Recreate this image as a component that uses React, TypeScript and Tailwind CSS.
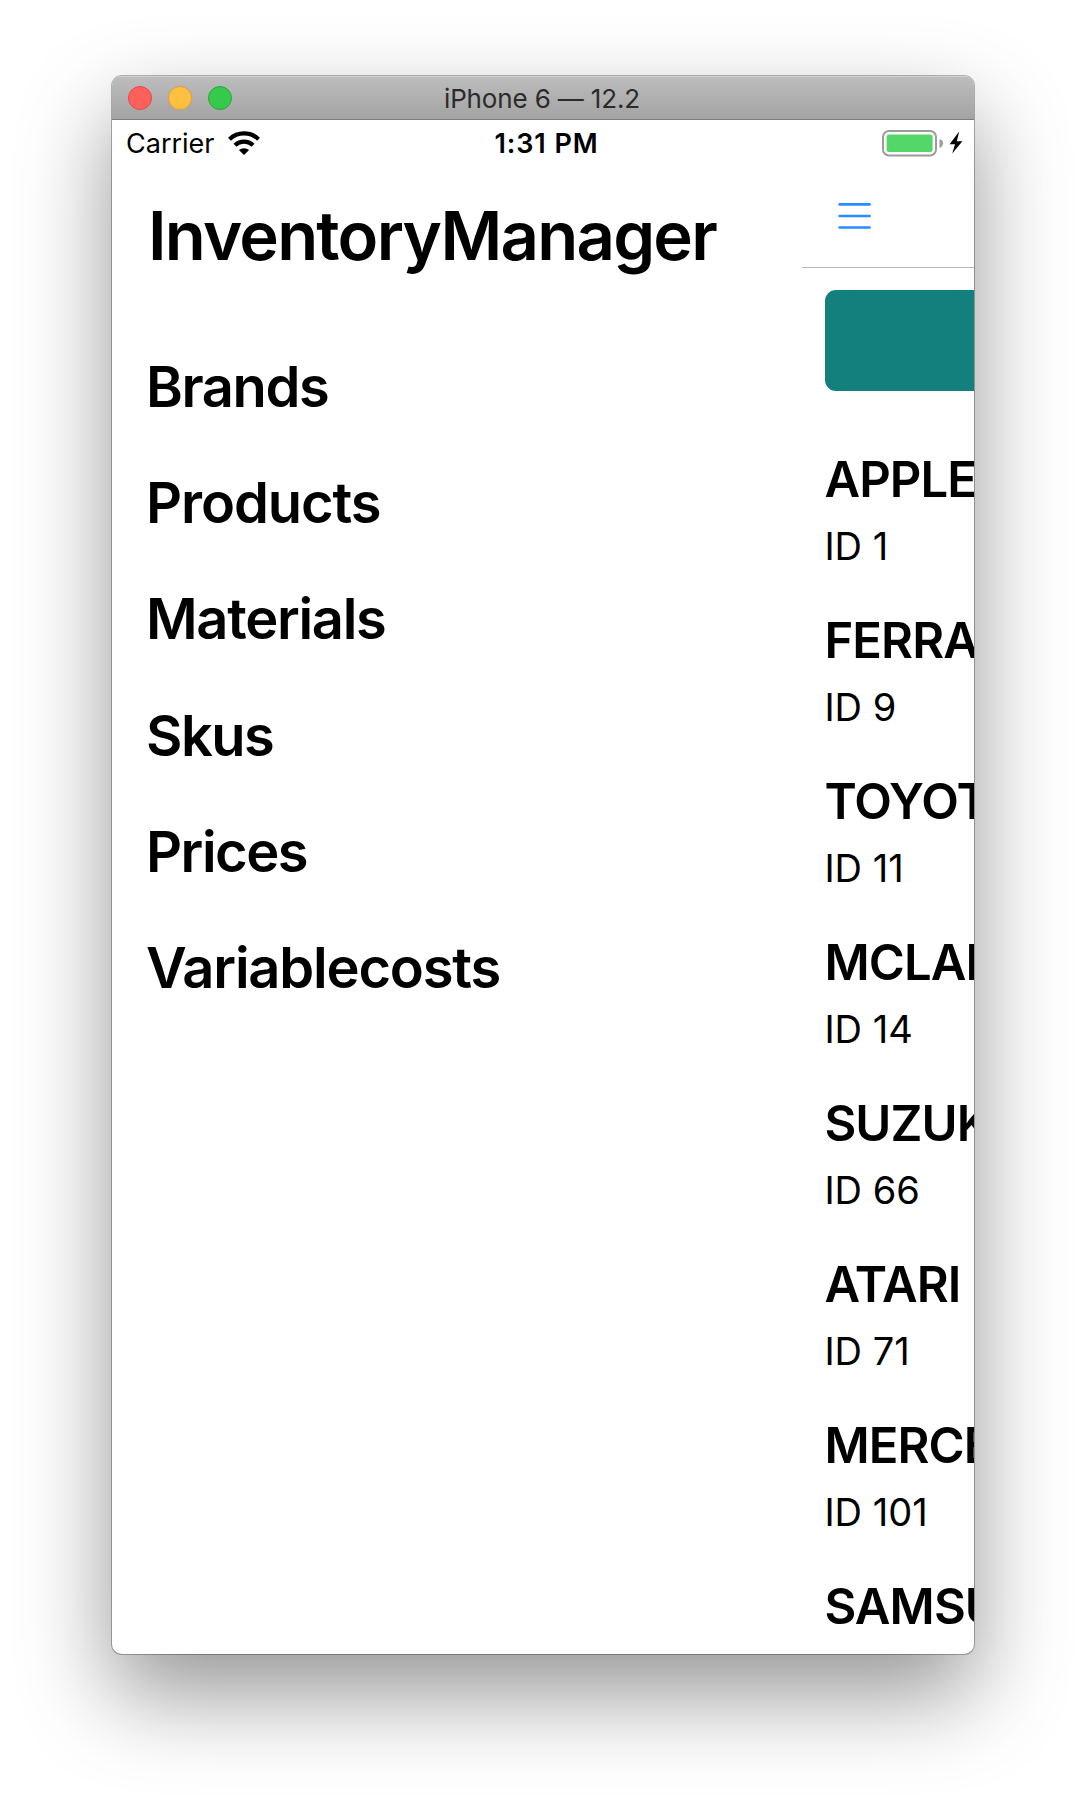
import React from "react";

const menu = [
  { label: "Brands", cls: "tracking-[-1.4px]" },
  { label: "Products", cls: "tracking-[-1.1px]" },
  { label: "Materials", cls: "tracking-[-1.3px]" },
  { label: "Skus", cls: "tracking-[-1.5px]" },
  { label: "Prices", cls: "tracking-[-1.5px]" },
  { label: "Variablecosts", cls: "tracking-[-1.2px]" },
];

const brands = [
  { name: "APPLE", id: 1 },
  { name: "FERRARI", id: 9 },
  { name: "TOYOTA", id: 11 },
  { name: "MCLAREN", id: 14 },
  { name: "SUZUKI", id: 66 },
  { name: "ATARI", id: 71 },
  { name: "MERCEDES", id: 101 },
  { name: "SAMSUNG", id: 102 },
];

function TitleBar() {
  return (
    <div className="relative flex h-11 shrink-0 items-center justify-center border-b border-[#7d7d7d] bg-linear-to-b from-[#bdbdbd] to-[#a3a3a3] shadow-[inset_0_1px_0_#d2d2d2]">
      <div className="absolute left-4 top-[10px] flex gap-4">
        <span className="size-6 rounded-full border border-[#e24b46] bg-[#fe605c]" />
        <span className="size-6 rounded-full border border-[#e0a033] bg-[#ffbf41]" />
        <span className="size-6 rounded-full border border-[#27a839] bg-[#35ca4b]" />
      </div>
      <span className="mr-[2px] mt-[2px] text-[26px] leading-none tracking-[-0.15px] text-[#2b2b2b]">iPhone 6 — 12.2</span>
    </div>
  );
}

function StatusBar() {
  return (
    <div className="flex h-[48px] shrink-0 items-center justify-between pl-[14px] pr-[10px]">
      <div className="flex w-[150px] items-center gap-[13px]">
        <span className="mb-px text-[27px] leading-none">Carrier</span>
        <svg className="mb-[2px]" width="32" height="24" viewBox="0 0 32 24" fill="none" stroke="#000" strokeWidth="4.2">
          <path d="M1.5 8.2 A 21 21 0 0 1 30.5 8.2" />
          <path d="M7 14.2 A 13 13 0 0 1 25 14.2" />
          <path d="M10.9 19 A 8 8 0 0 1 21.1 19 L 16 24 Z" fill="#000" stroke="none" />
        </svg>
      </div>
      <span className="mb-px ml-[3px] text-[27px] leading-none font-semibold tracking-[0.9px]">1:31 PM</span>
      <div className="flex w-[150px] items-center justify-end">
        <svg width="82" height="28" viewBox="0 0 82 28">
          <rect x="1" y="1" width="53" height="24.5" rx="6" fill="none" stroke="#9b9b9b" strokeWidth="2" />
          <rect x="4.6" y="4.5" width="46" height="17.5" rx="2.5" fill="#53d769" />
          <path d="M57.5 9 Q 61 10 61 13.3 Q 61 16.6 57.5 18 Z" fill="#9b9b9b" />
          <path d="M77.2 1.5 L 67.6 14.2 H 73 L 70.2 23.5 L 80.4 11.2 H 74.8 Z" fill="#000" />
        </svg>
      </div>
    </div>
  );
}

function Drawer() {
  return (
    <nav className="w-[690px] shrink-0">
      <h1 className="mt-[28px] ml-[36px] text-[67px] leading-[80px] font-semibold tracking-[-1.75px]">InventoryManager</h1>
      <ul className="mt-[53px] ml-[34px]">
        {menu.map((m) => (
          <li key={m.label} className="h-[116.2px] text-[56px] leading-[116.2px] font-semibold">
            <span className={m.cls}>{m.label}</span>
          </li>
        ))}
      </ul>
    </nav>
  );
}

function BrandsScreen() {
  return (
    <main className="w-[862px] shrink-0">
      <div className="h-[100px] border-b border-[#b8b8b8] pl-[35px] pt-[32.5px]">
        <svg width="34" height="30" viewBox="0 0 34 30" stroke="#2a8cff" strokeWidth="2.6" strokeLinecap="round">
          <path d="M2.6 3.4H32.6M2.6 15H32.6M2.6 26.5H32.6" />
        </svg>
      </div>
      <div className="mt-[22px] ml-[22.6px] h-[101px] rounded-[11px] bg-[#13807e]" />
      <ul className="mt-[59px] ml-[22.4px]">
        {brands.map((b) => (
          <li key={b.id} className="h-[161px]">
            <p className="text-[49px] leading-[60px] font-semibold tracking-[-0.9px]">{b.name}</p>
            <p className="mt-[6px] text-[38px] leading-[60px]">ID {b.id}</p>
          </li>
        ))}
      </ul>
    </main>
  );
}

export default function App() {
  return (
    <div className="h-[1802px] w-[1086px] overflow-hidden bg-white pt-[76px] font-['Inter',sans-serif] text-black">
      <div className="ml-[112px] flex h-[1578px] w-[862px] flex-col overflow-hidden rounded-[10px] bg-white shadow-[0_0_0_1px_rgba(0,0,0,0.28),0_40px_92px_rgba(0,0,0,0.42)]">
        <TitleBar />
        <StatusBar />
        <div className="flex min-h-0 flex-1 overflow-hidden">
          <Drawer />
          <BrandsScreen />
        </div>
      </div>
    </div>
  );
}
